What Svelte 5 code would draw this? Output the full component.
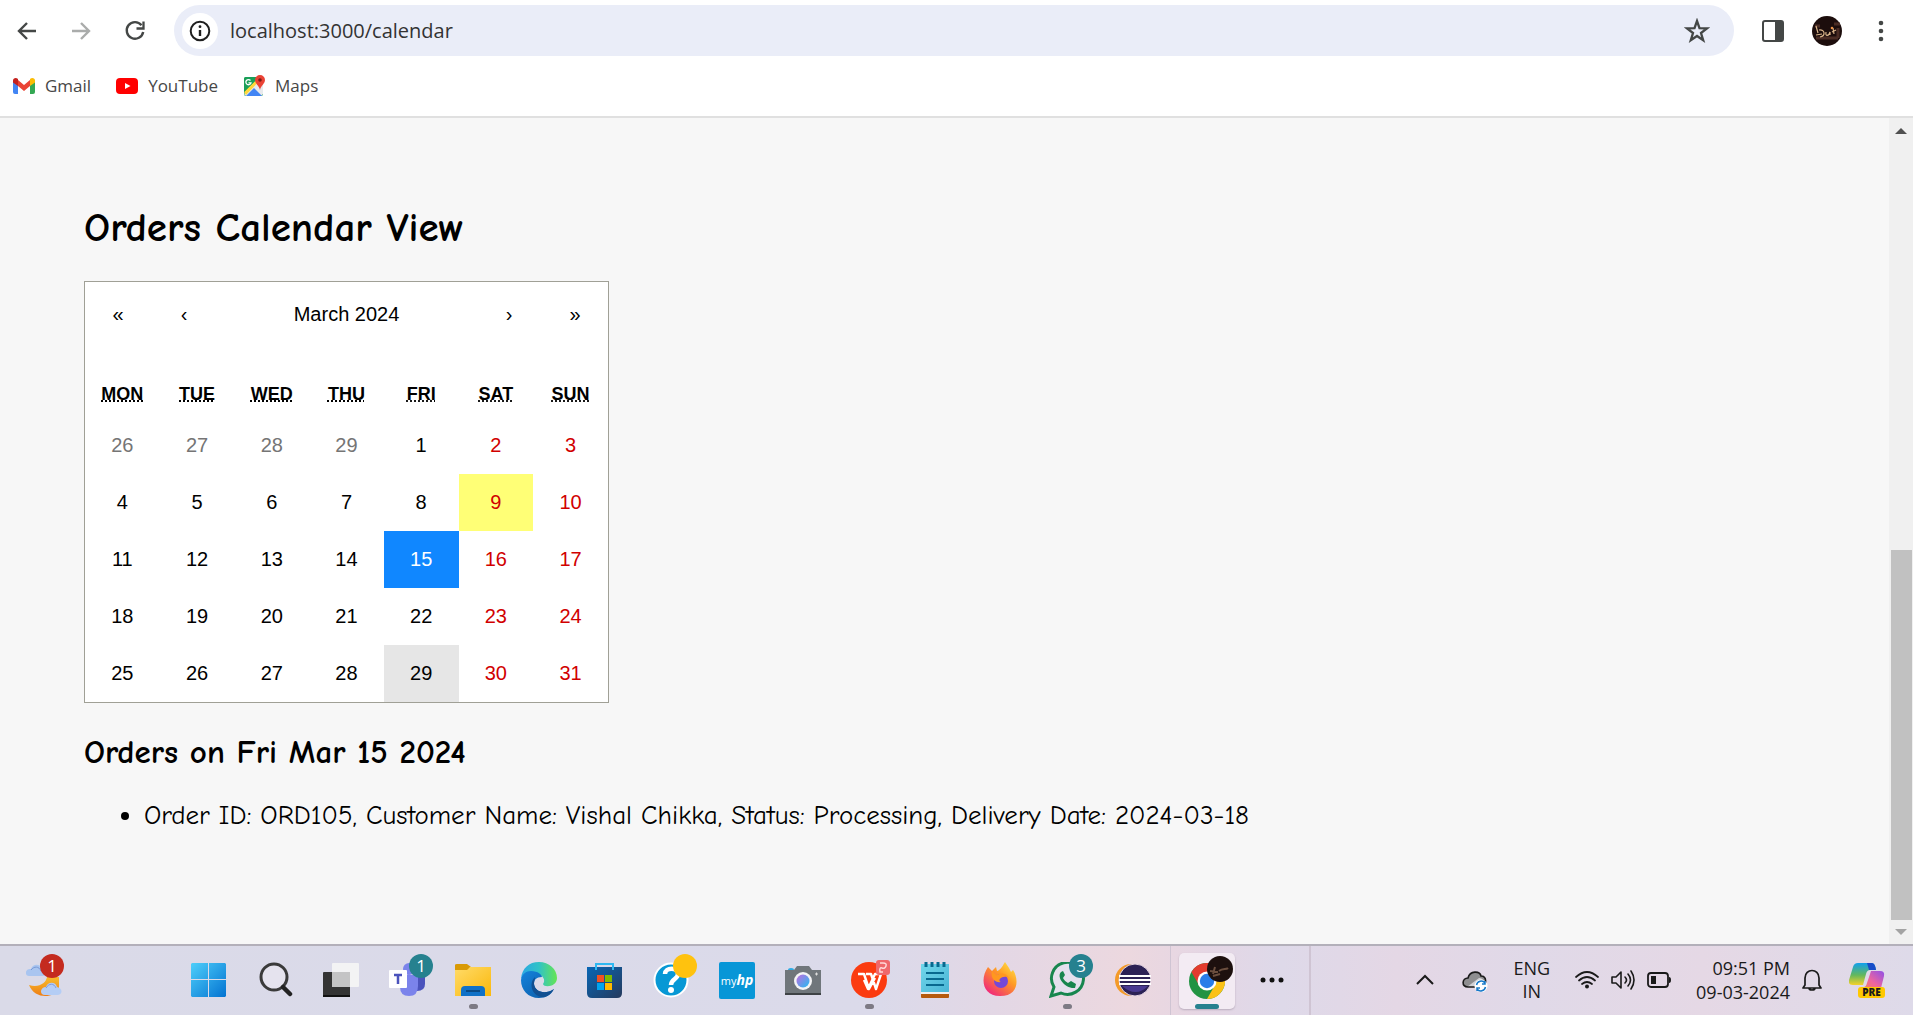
<script>
  const weekdays = [
    ['MON', 'Monday'], ['TUE', 'Tuesday'], ['WED', 'Wednesday'], ['THU', 'Thursday'],
    ['FRI', 'Friday'], ['SAT', 'Saturday'], ['SUN', 'Sunday']
  ];
  const start = Date.UTC(2024, 1, 26);
  const weeks = Array.from({ length: 5 }, (_, w) =>
    Array.from({ length: 7 }, (_, d) => {
      const date = new Date(start + (w * 7 + d) * 86400000);
      return { day: date.getUTCDate(), month: date.getUTCMonth(), weekend: d > 4 };
    })
  );
  const today = 9;
  const hovered = 29;
  let selected = $state(15);

  const orders = [
    { id: 'ORD105', customer: 'Vishal Chikka', status: 'Processing', delivery: '2024-03-18', day: 15 }
  ];
  const names = ['Fri', 'Sat', 'Sun', 'Mon', 'Tue', 'Wed', 'Thu'];
  let heading = $derived(`${names[(selected - 1) % 7]} Mar ${String(selected).padStart(2, '0')} 2024`);
  let dayOrders = $derived(orders.filter((o) => o.day === selected));
</script>

<div class="screen">
  <header class="browser">
    <nav class="toolbar" aria-label="Browser">
      <button class="tool" aria-label="Back">
        <svg width="24" height="24" viewBox="0 0 24 24"><path d="M21 12H4M12 4l-8 8 8 8" fill="none" stroke="#444746" stroke-width="2.4" /></svg>
      </button>
      <button class="tool" aria-label="Forward">
        <svg width="24" height="24" viewBox="0 0 24 24"><path d="M3 12h17M12 4l8 8-8 8" fill="none" stroke="#aaacab" stroke-width="2.4" /></svg>
      </button>
      <button class="tool" aria-label="Reload">
        <svg width="24" height="24" viewBox="0 0 24 24"><path d="M18.500 6.200A8.300 8.300 0 1 0 20.200 13" fill="none" stroke="#444746" stroke-width="2.400" /><path d="M20.500 2.500v7h-7" fill="none" stroke="#444746" stroke-width="2.300" /></svg>
      </button>
      <div class="omnibox">
        <button class="info" aria-label="Site information">
          <svg width="24" height="24" viewBox="0 0 24 24"><circle cx="12" cy="12" r="9.300" fill="none" stroke="#1f1f1f" stroke-width="2" /><path d="M12 11v6" stroke="#1f1f1f" stroke-width="2.400" /><circle cx="12" cy="7.700" r="1.400" fill="#1f1f1f" /></svg>
        </button>
        <input class="url" aria-label="Address" value="localhost:3000/calendar" />
        <button class="star" aria-label="Bookmark this page">
          <svg width="26" height="26" viewBox="0 0 26 26"><path d="M13 3l2.500 7.200 7.500.2-6 4.600 2.200 7.300-6.200-4.300-6.200 4.300L9 15 3 10.400l7.500-.2z" fill="none" stroke="#444746" stroke-width="2.300" /></svg>
        </button>
      </div>
      <div class="extras">
        <button class="tool" aria-label="Side panel">
          <svg width="22" height="22" viewBox="0 0 22 22"><rect x="1" y="1" width="20" height="20" rx="2" fill="#fff" stroke="#444746" stroke-width="2" /><path d="M13 1h8v20h-8z" fill="#444746" /></svg>
        </button>
        <button class="tool" aria-label="Profile">
          <svg width="30" height="30" viewBox="0 0 30 30"><circle cx="15" cy="15" r="15" fill="#1c0d0c" /><path d="M3 10h5M22 8h6M4 22h22M26 12v10" stroke="#4a2c24" stroke-width="3" /><path d="M4 10l2 7M7 14c6-1 7 6 1 7M14 16c-1 5 3 4 4 0v3M20 16l4-2M21 12l1 6M4 19l6-1" fill="none" stroke="#d9b48a" stroke-width="1.200" /><circle cx="20" cy="12" r="1.300" fill="#e78f45" /></svg>
        </button>
        <button class="tool" aria-label="Menu">
          <svg width="24" height="24" viewBox="0 0 24 24"><circle cx="12" cy="4" r="2.300" fill="#444746" /><circle cx="12" cy="12" r="2.300" fill="#444746" /><circle cx="12" cy="20" r="2.300" fill="#444746" /></svg>
        </button>
      </div>
    </nav>
    <nav class="bookmarks" aria-label="Bookmarks">
      <a href="#gmail">
        <svg width="22" height="22" viewBox="0 0 22 22"><path d="M0 5v12q0 2 2 2h3V8z" fill="#4285f4" /><path d="M22 5v12q0 2-2 2h-3V8z" fill="#34a853" /><path d="M5 5l6 5 6-5v6l-6 5-6-5z" fill="#ea4335" /><path d="M0 5.500C0 3 3 2 5 4v7L0 7.500z" fill="#c5221f" /><path d="M22 5.500C22 3 19 2 17 4v7l5-3.500z" fill="#fbbc04" /></svg>
        Gmail
      </a>
      <a href="#youtube">
        <svg width="22" height="22" viewBox="0 0 22 22"><rect y="3" width="22" height="16" rx="4" fill="#f00" /><path d="M9 8l5.500 3L9 14z" fill="#fff" /></svg>
        YouTube
      </a>
      <a href="#maps">
        <svg width="22" height="22" viewBox="0 0 22 22"><rect x="1" y="2" width="19" height="19" rx="2" fill="#1a9f58" /><path d="M1 19L19 2l1 1v16l-2 2H3z" fill="#e8eaed" /><path d="M3 21l8-8 8 8z" fill="#4285f4" /><path d="M1 17L16 2l3 1L3 20z" fill="#ffd83b" /><path d="M1 4q0-2 2-2h13L1 17z" fill="#1a9f58" /><path d="M7.500 5.500A2.600 2.600 0 1 0 8 7.800H5.500" fill="none" stroke="#fff" stroke-width="1.300" /><path d="M17 0a5 5 0 0 1 5 5c0 4-4 5-5 10-1-5-5-6-5-10a5 5 0 0 1 5-5z" fill="#ea4335" /><circle cx="17" cy="5" r="1.800" fill="#7b1c16" /></svg>
        Maps
      </a>
    </nav>
  </header>

  <div class="viewport">
    <main>
      <h2>Orders Calendar View</h2>
      <section class="calendar" aria-label="Calendar">
        <div class="navigation">
          <button aria-label="Previous year">«</button>
          <button aria-label="Previous month">‹</button>
          <button class="label">March 2024</button>
          <button aria-label="Next month">›</button>
          <button aria-label="Next year">»</button>
        </div>
        <table>
          <thead>
            <tr>
              {#each weekdays as [short, full]}
                <th scope="col"><abbr title={full}>{short}</abbr></th>
              {/each}
            </tr>
          </thead>
          <tbody>
            {#each weeks as week}
              <tr>
                {#each week as cell}
                  {@const current = cell.month === 2}
                  <td>
                    <button
                      class="day"
                      class:weekend={cell.weekend}
                      class:outside={!current}
                      class:today={current && cell.day === today}
                      class:hovered={current && cell.day === hovered}
                      class:selected={current && cell.day === selected}
                      onclick={() => { if (current) selected = cell.day; }}
                    >{cell.day}</button>
                  </td>
                {/each}
              </tr>
            {/each}
          </tbody>
        </table>
      </section>
      <h3>Orders on {heading}</h3>
      <ul>
        {#each dayOrders as o}
          <li>Order ID: {o.id}, Customer Name: {o.customer}, Status: {o.status}, Delivery Date: {o.delivery}</li>
        {/each}
      </ul>
    </main>
    <div class="scrollbar" aria-hidden="true">
      <svg width="24" height="24" viewBox="0 0 24 24"><path d="M6 16l6-6 6 6z" fill="#505050" /></svg>
      <div class="before"></div>
      <div class="thumb"></div>
      <svg width="24" height="24" viewBox="0 0 24 24"><path d="M6 9h12l-6 6z" fill="#a3a3a3" /></svg>
    </div>
  </div>

  <footer class="taskbar">
    <button class="app weather" aria-label="Weather">
      <svg width="36" height="36" viewBox="0 0 36 36">
        <defs><linearGradient id="moon" x2="0" y2="1"><stop stop-color="#f7bd2c" /><stop offset="1" stop-color="#ee7d15" /></linearGradient></defs>
        <path d="M3 23c10 3 17-2 18-8h12v12c-5 9-24 11-30-4z" fill="url(#moon)" />
        <path d="M3 14c-5 0-4-8 2-7 2-6 10-5 11 0 5 1 5 7 0 7z" fill="#a9c5f0" /><path d="M5 8c3-4 8-4 10 1" fill="none" stroke="#7898d5" />
        <path d="M19 33c-6 0-5-8 1-8 2-6 10-5 11 0 6 1 6 8 0 8z" fill="#b4cdf5" /><path d="M20 26c3-5 8-5 10 0" fill="none" stroke="#7f9adb" />
      </svg>
      <span class="badge red">1</span>
    </button>

    <div class="apps">
      <button class="app" aria-label="Start">
        <svg width="36" height="36" viewBox="0 0 36 36"><defs><linearGradient id="win" gradientUnits="userSpaceOnUse" x1="0" y1="0" x2="36" y2="36"><stop stop-color="#4fd0fb" /><stop offset="1" stop-color="#0170d0" /></linearGradient></defs><path d="M1 1h16v16H0V2zM18 1h16l1 1v15H18zM0 18h17v17H1l-1-1zM18 18h17v16l-1 1H18z" fill="url(#win)" /></svg>
      </button>
      <button class="app" aria-label="Search">
        <svg width="36" height="36" viewBox="0 0 36 36"><circle cx="17" cy="15" r="13" fill="#e5e3ee" stroke="#3a3a3a" stroke-width="3" /><path d="M26 25l7 7" stroke="#222" stroke-width="4.500" stroke-linecap="round" /></svg>
      </button>
      <button class="app" aria-label="Task view">
        <svg width="36" height="36" viewBox="0 0 36 36"><rect y="10" width="27" height="25" rx="1" fill="#343434" /><rect y="33" width="27" height="2" fill="#111" /><rect x="9" y="1" width="27" height="24" rx="1" fill="#f3f3f4" /><path d="M9 10h18v15H9z" fill="#c4c4c5" /></svg>
      </button>
      <button class="app" aria-label="Teams">
        <svg width="36" height="36" viewBox="0 0 36 36"><circle cx="20" cy="7" r="6" fill="#7b83eb" /><path d="M23 13h13v9q0 7-8 7z" fill="#4b53bc" /><path d="M11 13h18v11q0 10-9 10t-9-9z" fill="#7b83eb" /><rect y="8" width="18" height="18" rx="1" fill="#fff" /><path d="M5 13h8M9 13v9" stroke="#4b53bc" stroke-width="2.500" /></svg>
        <span class="badge">1</span>
      </button>
      <button class="app" aria-label="File Explorer">
        <svg width="36" height="36" viewBox="0 0 36 36"><defs><linearGradient id="folder" x2="1" y2="1"><stop stop-color="#ffdb69" /><stop offset="1" stop-color="#fbb80b" /></linearGradient></defs><path d="M0 3q0-1 2-1h10l4 3v5H0z" fill="#d99a05" /><path d="M0 8h12l3-3h21v29H0z" fill="url(#folder)" /><path d="M6 34v-6q0-4 4-4h16q4 0 4 4v6z" fill="#1071c7" /><path d="M11 29h14" stroke="#0a4a85" stroke-width="2" /></svg>
        <span class="running"></span>
      </button>
      <button class="app" aria-label="Edge">
        <svg width="36" height="36" viewBox="0 0 36 36"><defs><linearGradient id="edge1" x2="1"><stop stop-color="#2ba7e4" /><stop offset=".5" stop-color="#31c3c6" /><stop offset="1" stop-color="#66e552" /></linearGradient><linearGradient id="edge2" x2="1" y2="1"><stop stop-color="#1483dc" /><stop offset="1" stop-color="#0c59a4" /></linearGradient></defs><path d="M0 17C1 6 8 0 18 0s18 7 18 16c0 9-13 10-14 6 3-4 0-9-6-10S4 12 0 17z" fill="url(#edge1)" /><path d="M0 18C1 12 5 9 10 9c7 0 11 4 11 6-6 0-8 3-8 7 1 8 11 11 20 5-3 6-8 9-15 9C7 36 0 28 0 18z" fill="url(#edge2)" /><path d="M14 15c-8 8-1 21 9 20 4-1 8-4 10-8-9 6-19 3-20-5 0-3 1-5 1-7z" fill="#114f91" /></svg>
      </button>
      <button class="app" aria-label="Microsoft Store">
        <svg width="36" height="36" viewBox="0 0 36 36"><defs><linearGradient id="store" x2="1" y2="1"><stop stop-color="#0866b5" /><stop offset="1" stop-color="#263a5d" /></linearGradient></defs><path d="M0 5h35v26q0 5-5 5H5q-5 0-5-5z" fill="url(#store)" /><path d="M9 8V2h17v6" fill="none" stroke="#2eb8f1" stroke-width="2" /><path d="M10 13h7v7h-7z" fill="#f25022" /><path d="M18 13h7v7h-7z" fill="#7fba00" /><path d="M10 21h7v7h-7z" fill="#00a4ef" /><path d="M18 21h7v7h-7z" fill="#ffb900" /></svg>
      </button>
      <button class="app" aria-label="Help">
        <svg width="36" height="36" viewBox="0 0 36 36"><circle cx="18" cy="18" r="16.500" fill="#0798d5" stroke="#fff" stroke-width="2" /><path d="M12 12c0-7 13-7 13 0 0 5-7 5-7 11" fill="none" stroke="#fff" stroke-width="4.500" /><circle cx="18" cy="28" r="3" fill="#fff" /></svg>
        <span class="badge yellow"></span>
      </button>
      <button class="app" aria-label="myHP"><span class="hp">my<b>hp</b></span></button>
      <button class="app" aria-label="Camera">
        <svg width="36" height="36" viewBox="0 0 36 36"><defs><linearGradient id="lens" x2="1" y2="1"><stop stop-color="#c36be0" /><stop offset="1" stop-color="#22bdf2" /></linearGradient></defs><path d="M3 8q0-2 3-2t3 2z" fill="#2dace5" /><path d="M0 8h9l3-4h12l3 4h9v25H0z" fill="#70767b" /><path d="M0 31h36v2H0z" fill="#3e4245" /><circle cx="18" cy="19" r="9" fill="#f4f4f6" /><circle cx="18" cy="19" r="6.500" fill="url(#lens)" /><path d="M30 12h3M31.500 10.500v3" stroke="#ddd" /></svg>
      </button>
      <button class="app" aria-label="WPS Office">
        <svg width="36" height="36" viewBox="0 0 36 36"><circle cx="18" cy="18" r="18" fill="#fb3b10" /><path d="M7 12h6l5 15 6-11M15 12h5l5 15 5-15h-6l-7 15-4-9" fill="none" stroke="#fff" stroke-width="2.400" stroke-linejoin="round" /></svg>
        <svg class="corner" width="14" height="16" viewBox="0 0 14 16"><rect width="14" height="15" rx="3" fill="#ef686b" /><path d="M4 3h3q4 0 3 3t-4 2-2 4h3" fill="none" stroke="#ffd8d8" stroke-width="1.500" /></svg>
        <span class="running"></span>
      </button>
      <button class="app" aria-label="Notepad">
        <svg width="36" height="36" viewBox="0 0 36 36"><defs><linearGradient id="pad" x2="1" y2="1"><stop stop-color="#71d7eb" /><stop offset="1" stop-color="#49b5d5" /></linearGradient></defs><path d="M4 31h28v4q0 1-1 1H5q-1 0-1-1z" fill="#b65a0d" /><path d="M4 29h28v3H4z" fill="#eee" /><path d="M4 2h28v28H4z" fill="url(#pad)" /><path d="M9 11h18M9 17h18M9 23h18" stroke="#08698f" stroke-width="2" /><path d="M9 0v5M15 0v5M21 0v5M27 0v5" stroke="#08698f" stroke-width="3" /></svg>
      </button>
      <button class="app" aria-label="Firefox">
        <svg width="36" height="36" viewBox="0 0 36 36"><defs><linearGradient id="fox" x1="1" x2=".2" y2="1"><stop stop-color="#fff04a" /><stop offset=".45" stop-color="#ff9a24" /><stop offset="1" stop-color="#f0217f" /></linearGradient></defs><path d="M5 5l4 4 4-4 1 4c4-1 6-6 8-9l4 6 2 4 2-2c6 9 6 26-13 26C-1 34-3 16 5 5z" fill="url(#fox)" /><circle cx="18" cy="19" r="7" fill="#7448d7" /><path d="M9 9l6 6-5 2c2-5 12-9 16-1-5-4-13 2-8 4-5 1-11-3-9-11z" fill="#ff981f" /></svg>
      </button>
      <button class="app" aria-label="WhatsApp">
        <svg width="36" height="36" viewBox="0 0 36 36"><path d="M2 34l3-9A16 16 0 1 1 12 31z" fill="#e4e0ed" stroke="#17864e" stroke-width="3" /><path d="M12 10c-5 5 4 17 14 16l1-4-5-3-3 2c-2-1-4-3-5-5l2-3-2-4z" fill="#17864e" /></svg>
        <span class="badge">3</span>
        <span class="running"></span>
      </button>
      <button class="app" aria-label="Eclipse">
        <svg width="36" height="36" viewBox="0 0 36 36"><circle cx="16" cy="18" r="16" fill="#f49a28" /><circle cx="20" cy="18" r="16" fill="#2c2255" stroke="#e6d6e2" /><path d="M7 24h26q-12 12-26 0z" fill="#493a91" /><path d="M4 14h32M4 18h32M4 22h32" stroke="#fff" stroke-width="2" /></svg>
      </button>
      <div class="active-group">
        <button class="app tile" aria-label="Chrome">
          <svg width="36" height="36" viewBox="0 0 36 36"><circle cx="18" cy="18" r="18" fill="#229342" /><path d="M2.400 9A18 18 0 0 1 33.600 9H18L10.200 22.500z" fill="#e33b2e" /><path d="M33.600 9A18 18 0 0 1 18 36l8-14V9z" fill="#fbc116" /><circle cx="18" cy="18" r="9.500" fill="#fff" /><circle cx="18" cy="18" r="7.200" fill="#2a7de9" /></svg>
          <svg class="avatar" width="26" height="26" viewBox="0 0 26 26"><circle cx="13" cy="13" r="13" fill="#1d100e" /><path d="M3 15l8 1M8 11l-2 7M12 15c4-3 7-1 9-3M6 20l7-2" fill="none" stroke="#6b4e3e" stroke-width="2" /></svg>
          <span class="running wide"></span>
        </button>
        <button class="app" aria-label="More apps">
          <svg width="36" height="36" viewBox="0 0 36 36"><circle cx="9" cy="18" r="2.500" fill="#111" /><circle cx="18" cy="18" r="2.500" fill="#111" /><circle cx="27" cy="18" r="2.500" fill="#111" /></svg>
        </button>
      </div>
    </div>

    <div class="tray">
      <button aria-label="Show hidden icons"><svg width="24" height="24" viewBox="0 0 24 24"><path d="M4 16l8-8 8 8" fill="none" stroke="#1a1a1a" stroke-width="2" /></svg></button>
      <button class="cloud" aria-label="OneDrive">
        <svg width="26" height="24" viewBox="0 0 26 24"><path d="M6 19c-7 0-6-9 0-9 2-8 12-7 13-2 6 0 6 9 1 11z" fill="#8e8e90" /><path d="M5 19l12-9c6 0 7 7 3 9z" fill="#d2d2d6" /><path d="M6 19c-7 0-6-9 0-9 2-8 12-7 13-2 6 0 6 9 1 11z" fill="none" stroke="#1a1a1a" stroke-width="1.600" /><circle cx="19" cy="18" r="6.500" fill="#fff" /><path d="M14.500 17a4.800 4.800 0 0 1 8.500-2M23 13v3h-3M23.500 19a4.800 4.800 0 0 1-8.500 2M15 23v-3h3" fill="none" stroke="#1779c9" stroke-width="1.500" /></svg>
      </button>
      <button class="language" aria-label="Input language">ENG<br />IN</button>
      <button class="status" aria-label="Network, volume and battery">
        <svg width="24" height="24" viewBox="0 0 24 24"><path d="M1 9q11-10 22 0M4 12.500q8-7 16 0M7 16q5-4 10 0" fill="none" stroke="#1a1a1a" stroke-width="1.700" stroke-linecap="round" /><circle cx="12" cy="18.500" r="2" fill="#1a1a1a" /></svg>
        <svg width="24" height="24" viewBox="0 0 24 24"><path d="M1 9h4l5-5v16l-5-5H1zM14 9q3 3 0 6M17 6q5 6 0 12M20 3q6 9 0 18" fill="none" stroke="#1a1a1a" stroke-width="1.600" stroke-linejoin="round" stroke-linecap="round" /></svg>
        <svg width="24" height="24" viewBox="0 0 24 24"><rect x="1" y="5" width="20" height="14" rx="3" fill="none" stroke="#1a1a1a" stroke-width="1.800" /><path d="M4 8h5v8H4z" fill="#1a1a1a" /><path d="M22 9q2 0 2 3t-2 3z" fill="#1a1a1a" /></svg>
      </button>
      <button class="clock">09:51 PM<br />09-03-2024</button>
      <button class="bell" aria-label="Notifications"><svg width="24" height="24" viewBox="0 0 24 24"><path d="M5 17V10C5 0 19 0 19 10v7l2 3H3zM9 20q0 2 3 2t3-2" fill="none" stroke="#1a1a1a" stroke-width="1.700" stroke-linejoin="round" /></svg></button>
      <button class="copilot" aria-label="Copilot">
        <svg width="36" height="36" viewBox="0 0 36 36"><defs><linearGradient id="cop1" x2="0" y2="1"><stop stop-color="#11a0ec" /><stop offset=".55" stop-color="#63b85d" /><stop offset="1" stop-color="#f5d229" /></linearGradient><linearGradient id="cop2" x1="1" x2="0" y2="1"><stop stop-color="#8f51e8" /><stop offset=".5" stop-color="#ef659d" /><stop offset="1" stop-color="#f6933a" /></linearGradient></defs><path d="M9 1h14q3 0 4 7h-6q-3 0-4 4l-3 11H4q-5 0-4-5L4 5q1-4 5-4z" fill="url(#cop1)" /><path d="M18 1h5q3 0 4 7h-7z" fill="#174cc8" /><path d="M22 9h9q5 0 4 5l-3 12q-1 4-6 4H10l5-5q2 0 3-4z" fill="url(#cop2)" /></svg>
        <span class="pre">PRE</span>
      </button>
    </div>
  </footer>
</div>

<style>
  :global(body) { margin: 0; }
  .screen {
    display: flex;
    flex-direction: column;
    min-height: 100vh;
    font-family: 'Open Sans', 'Noto Sans', sans-serif;
    background: #f7f7f7;
    color: #000;
  }
  button {
    padding: 0;
    border: 0;
    background: none;
    font: inherit;
    color: inherit;
  }
  svg { display: block; flex: none; }

  .browser {
    background: #fff;
    border-bottom: 2px solid #e0e0e0;
  }
  .toolbar {
    display: flex;
    align-items: center;
    padding: 5px 5px 0 0;
  }
  .tool {
    display: grid;
    place-items: center;
    width: 54px;
    height: 40px;
  }
  .omnibox {
    display: flex;
    align-items: center;
    flex: 1;
    gap: 12px;
    height: 51px;
    margin-left: 12px;
    padding: 0 24px 0 8px;
    border-radius: 26px;
    background: #eaedf8;
  }
  .info {
    display: grid;
    place-items: center;
    width: 36px;
    height: 36px;
    border-radius: 50%;
    background: #fff;
  }
  .url {
    flex: 1;
    min-width: 0;
    padding: 0;
    border: 0;
    outline: 0;
    background: none;
    font: 20px 'Open Sans', 'Noto Sans', sans-serif;
    color: #333;
  }
  .extras { display: flex; margin-left: 12px; }
  .bookmarks {
    display: flex;
    gap: 25px;
    padding: 17px 13px;
  }
  .bookmarks a {
    display: flex;
    align-items: center;
    gap: 10px;
    font-size: 17px;
    line-height: 26px;
    color: #474747;
    text-decoration: none;
  }

  .viewport { display: flex; flex: 1; }
  main {
    flex: 1;
    min-width: 0;
    padding: 85px 84px 0;
    font-family: 'Comic Sans MS', 'Comic Neue', 'Open Sans', sans-serif;
  }
  h2 {
    margin: 0 0 28px;
    font-size: 41px;
    line-height: 50px;
  }
  h3 {
    margin: 29px 0 24px;
    font-size: 33px;
    line-height: 40px;
  }
  ul { margin: 0; padding-left: 60px; }
  li { font-size: 27px; line-height: 40px; }

  .calendar {
    box-sizing: border-box;
    width: 525px;
    max-width: 100%;
    border: 1px solid #a0a096;
    background: #fff;
    font-family: 'Liberation Sans', Arial, sans-serif;
    font-size: 20px;
  }
  .navigation {
    display: flex;
    height: 66px;
    margin-bottom: 24px;
  }
  .navigation button { width: 66px; padding-bottom: 2px; }
  .navigation .label { flex: 1; }
  table {
    width: 100%;
    table-layout: fixed;
    border-collapse: collapse;
  }
  th {
    padding: 9px 0;
    font-size: 18px;
    line-height: 27px;
  }
  abbr { text-decoration: underline dotted; }
  td { padding: 0; }
  .day {
    display: block;
    width: 100%;
    height: 57px;
    line-height: 57px;
  }
  .weekend { color: #d10000; }
  .outside { color: #757575; }
  .today { background: #ffff76; }
  .hovered { background: #e6e6e6; }
  .selected { background: #1087ff; color: #fff; }

  .scrollbar {
    display: flex;
    flex-direction: column;
    width: 24px;
    background: #f0f0f0;
  }
  .before { flex: 408; }
  .thumb { flex: 370; margin: 0 1px 0 2px; background: #c1c1c1; }

  .taskbar {
    display: flex;
    align-items: stretch;
    height: 69px;
    border-top: 2px solid #b3b0ba;
    background: linear-gradient(90deg, #dadae8 0%, #dbdaea 46%, #e3d7e5 52%, #ecd8df 59%, #e5d6e4 63%, #ded9e9 67%, #e4d7e5 73%, #e0d9e8 80%, #e5d8e5 89%, #dedae9 100%);
    color: #1a1a1a;
  }
  .app {
    position: relative;
    display: grid;
    place-items: center;
    width: 66px;
    padding-bottom: 1px;
  }
  .weather { margin: 0 99px 0 11px; }
  .apps { display: flex; }
  .badge {
    position: absolute;
    top: 8px;
    right: 7px;
    width: 24px;
    height: 24px;
    border-radius: 50%;
    background: #26818f;
    font-size: 17px;
    line-height: 24px;
    color: #fff;
  }
  .red { right: 13px; background: #c42b1f; }
  .yellow { background: #ffc20e; }
  .running {
    position: absolute;
    bottom: 6px;
    width: 9px;
    height: 5px;
    border-radius: 3px;
    background: #7d7a84;
  }
  .wide { bottom: 0; width: 24px; background: #26818f; }
  .corner { position: absolute; top: 14px; right: 12px; }
  .avatar { position: absolute; top: 3px; right: 2px; }
  .hp {
    width: 36px;
    border-radius: 2px;
    background: #0796d7;
    font-size: 11px;
    line-height: 36px;
    color: #fff;
  }
  .hp b { font-style: italic; font-size: 14px; }
  .active-group {
    display: flex;
    align-items: center;
    gap: 4px;
    margin-left: 4px;
    padding: 0 4px 0 8px;
    border: solid #cfc4d3;
    border-width: 0 2px 0 1px;
  }
  .tile {
    width: 56px;
    height: 56px;
    padding: 0;
    border-radius: 5px;
    background: #f3ebf3;
    box-shadow: 0 1px 2px #b9adbd;
  }
  .tray {
    display: flex;
    align-items: center;
    gap: 25px;
    margin-left: auto;
    padding: 0 28px 2px 0;
    font-size: 18px;
    line-height: 23px;
  }
  .status { display: flex; gap: 12px; }
  .clock { line-height: 24px; text-align: right; }
  .bell { margin-left: -15px; }
  .copilot { position: relative; }
  .pre {
    position: absolute;
    right: 0;
    bottom: 0;
    width: 27px;
    border-radius: 3px;
    background: #ffc800;
    font-size: 10px;
    font-weight: 800;
    line-height: 11px;
  }
</style>
